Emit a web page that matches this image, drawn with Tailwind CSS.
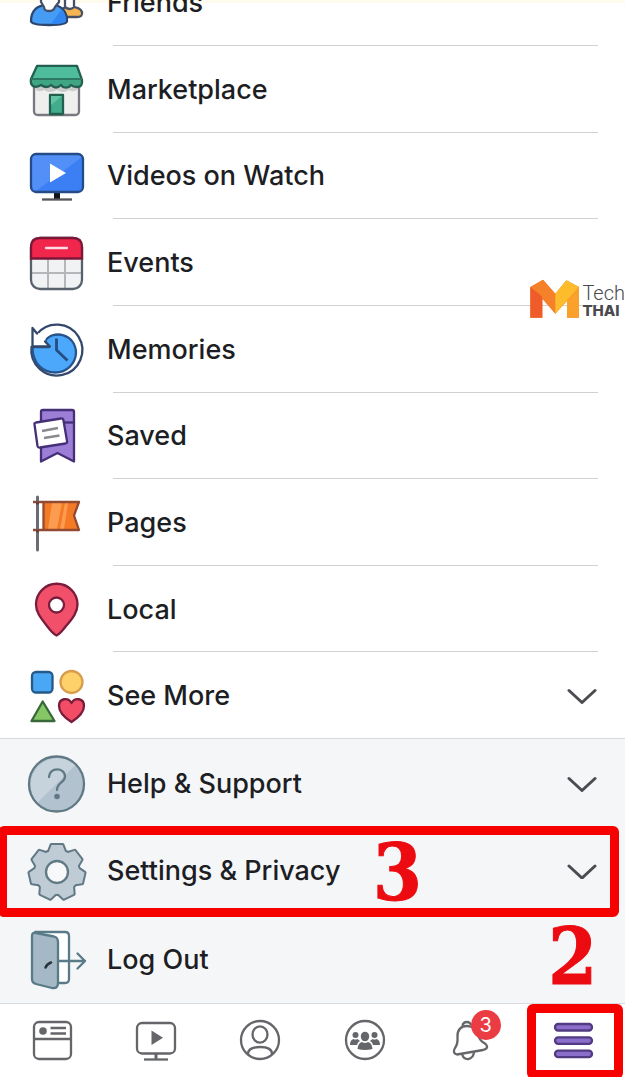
<!DOCTYPE html>
<html lang="en">
<head>
<meta charset="utf-8">
<meta name="viewport" content="width=device-width, initial-scale=1">
<title>Menu</title>
<script src="https://cdn.jsdelivr.net/npm/@tailwindcss/browser@4"></script>
</head>
<body class="bg-white font-['Inter','Liberation_Sans',sans-serif] text-[#1d1e24]">
<div class="relative flex min-h-screen flex-col overflow-hidden">
  <main class="flex flex-1 flex-col">

    <!-- Row scrolled partly out of view -->
    <div class="flex h-[46px] flex-col justify-end overflow-hidden bg-[linear-gradient(#fffbed_3px,transparent_3px)]">
      <a href="#friends" class="flex h-[86px] shrink-0 items-center gap-5 px-[27px] pt-0.5 text-[27px] leading-8 font-medium">
        <svg class="size-[60px] shrink-0" viewBox="0 0 60 60" fill="none" stroke-width="2.300" stroke-linejoin="round">
          <path d="M34 37C37 33 52 32 55 39Q56 44 50 44H34Z" fill="#f5b550" stroke="#475067"/>
          <path d="M38 24h9v10q-4 4-9 0Z" fill="#fff" stroke="#475067"/>
          <path d="M4 48C4 38 10 33 18 32H28C36 34 40 40 40 48Q40 52 22 52Q4 52 4 48Z" fill="#459cf5" stroke="#2c4670"/>
          <path d="M24 51Q39 51 39 47Q39 41 34 37Z" fill="#3286ef"/>
          <path d="M14 18h18v11L28 34Q27 38 22 38Q17 38 17 34L14 29Z" fill="#fff" stroke="#475067"/>
        </svg>
        <span>Friends</span>
      </a>
      <hr class="mr-[27px] ml-[113px] border-[#d0d1d4]">
    </div>

    <ul class="flex flex-1 flex-col text-[27px] leading-8 font-medium">
      <li class="flex min-h-16 flex-1 flex-col">
        <a href="#marketplace" class="flex flex-1 items-center gap-5 px-[27px] pt-0.5">
          <svg class="size-[60px] shrink-0" viewBox="0 0 60 60" fill="none" stroke-width="2.300" stroke-linejoin="round">
            <path d="M7 24V51Q7 55 11 55H48Q52 55 52 51V24Z" fill="#efefee" stroke="#7b7781"/>
            <path d="M8 26H51V29Q47 33 42 30Q36 34 30 30Q23 34 17 30Q11 33 8 29Z" fill="#c9cccb"/>
            <path d="M23 35H36V54H23Z" fill="#43ac8c" stroke="#23614f"/>
            <path d="M24 45L35 36H24Z" fill="#63c3a5"/>
            <path d="M10 6H50L55 20Q56 27 50 27Q46 27 44 25Q41 29 36 27L34 25Q29 30 24 25Q20 29 14 25Q9 28 6 26Q3 24 4 19Z" fill="#3fa583" stroke="#24604f"/>
            <path d="M11 7H49L53 18H6Z" fill="#4fbd9c"/>
            <path d="M4 19H55" stroke="#2d7862" stroke-width="2"/>
          </svg>
          <span>Marketplace</span>
        </a>
        <hr class="mr-[27px] ml-[113px] border-[#d0d1d4]">
      </li>
      <li class="flex min-h-16 flex-1 flex-col">
        <a href="#watch" class="flex flex-1 items-center gap-5 px-[27px] pt-0.5">
          <svg class="size-[60px] shrink-0" viewBox="0 0 60 60" fill="none">
            <path d="M27 45h6v8h-6z" fill="#111319"/>
            <path d="M15 53.500H45" stroke="#55565c" stroke-width="2.300"/>
            <rect x="4" y="8" width="52" height="38" rx="5" fill="#3c7ef3"/>
            <path d="M5 38V13Q5 9 9 9H51Q54 9 54 12L9 45Q5 45 5 38Z" fill="#5290f8"/>
            <rect x="4" y="8" width="52" height="38" rx="5" stroke="#254b86" stroke-width="2.300"/>
            <path d="M23 17.500L39 27L23 36.500Z" fill="#fff"/>
          </svg>
          <span>Videos on Watch</span>
        </a>
        <hr class="mr-[27px] ml-[113px] border-[#d0d1d4]">
      </li>
      <li class="flex min-h-16 flex-1 flex-col">
        <a href="#events" class="flex flex-1 items-center gap-5 px-[27px] pt-0.5">
          <svg class="size-[60px] shrink-0" viewBox="0 0 60 60" fill="none" stroke-width="2.300">
            <rect x="4" y="5" width="51" height="51" rx="9" fill="#f1f2f4"/>
            <path d="M21 26V55M38 26V55M5 40H54" stroke="#b5b6ba" stroke-width="2"/>
            <rect x="4" y="5" width="51" height="51" rx="9" stroke="#59616d"/>
            <path d="M4 25.500V14Q4 5 13 5H46Q55 5 55 14V25.500Z" fill="#f0264c" stroke="#7d1637"/>
            <path d="M19 15H40" stroke="#ffdce3" stroke-linecap="round"/>
          </svg>
          <span>Events</span>
        </a>
        <hr class="mr-[27px] ml-[113px] border-[#d0d1d4]">
      </li>
      <li class="flex min-h-16 flex-1 flex-col">
        <a href="#memories" class="flex flex-1 items-center gap-5 px-[27px] pt-0.5">
          <svg class="size-[60px] shrink-0" viewBox="0 0 60 60" fill="none" stroke="#33486b" stroke-width="2.300" stroke-linejoin="round" stroke-linecap="round">
            <path d="M10 14A25.500 25.500 0 1 1 4.500 27" fill="#fff"/>
            <path d="M5.500 27H22L18 21C26 9 49 14 49 33A20.500 20.500 0 0 1 28.500 52.500C16 52.500 5.500 44 5.500 27Z" fill="#4ba8fb" stroke="#27548c"/>
            <path d="M5.500 8V26.500H23L18 21.500L20 12L10 13.500Z" fill="#fff" stroke="none"/>
            <path d="M18 21.500L23 26.500H5.500V8L10 13.500"/>
            <path d="M29.500 18.500V30L40.500 40.500" stroke="#264d80" stroke-width="2.800" stroke-linecap="butt"/>
          </svg>
          <span>Memories</span>
        </a>
        <hr class="mr-[27px] ml-[113px] border-[#d0d1d4]">
      </li>
      <li class="flex min-h-16 flex-1 flex-col">
        <a href="#saved" class="flex flex-1 items-center gap-5 px-[27px] pt-0.5">
          <svg class="size-[60px] shrink-0" viewBox="0 0 60 60" fill="none" stroke="#452f78" stroke-width="2.300" stroke-linejoin="round">
            <path d="M14 55.500V6Q14 4 16 4H45Q47 4 47 6V55.500L30.500 47Z" fill="#9d7ed6"/>
            <path d="M36 16.500H47"/>
            <path d="M9 16.500L34 12.500Q36 12 36.500 14.500L40 35Q40.500 37 38.500 37.500L13 41.500Q11 42 10.500 40L7.500 18.500Q7 17 9 16.500Z" fill="#fff"/>
            <path d="M15 25L31 22M17 32L32.500 29.500" stroke="#8b898e"/>
          </svg>
          <span>Saved</span>
        </a>
        <hr class="mr-[27px] ml-[113px] border-[#d0d1d4]">
      </li>
      <li class="flex min-h-16 flex-1 flex-col">
        <a href="#pages" class="flex flex-1 items-center gap-5 px-[27px] pt-0.5">
          <svg class="size-[60px] shrink-0" viewBox="0 0 60 60" fill="none" stroke-width="2.300" stroke-linejoin="round">
            <path d="M16.500 9H52L47 22.500L52 37H16.500Z" fill="#f47a25"/>
            <path d="M25 10H35L30 36H21ZM38 10H41L37 36H33Z" fill="#fb9c51"/>
            <path d="M6 9H52L47 22.500L52 37H6M16.500 9V37" stroke="#944a30"/>
            <path d="M10.500 4V57" stroke="#6b6d75" stroke-width="3" stroke-linecap="round"/>
            <path d="M9 10h3M9 38h3" stroke="#683d3b" stroke-width="3"/>
          </svg>
          <span>Pages</span>
        </a>
        <hr class="mr-[27px] ml-[113px] border-[#d0d1d4]">
      </li>
      <li class="flex min-h-16 flex-1 flex-col">
        <a href="#local" class="flex flex-1 items-center gap-5 px-[27px] pt-0.5">
          <svg class="size-[60px] shrink-0" viewBox="0 0 60 60" fill="none" stroke="#7a1c3b" stroke-width="2.300" stroke-linejoin="round">
            <path d="M29.500 55.500Q26 54 20 46C13 37 9 32 9 24.500A20.500 20.500 0 0 1 50.500 24.500C50.500 32 46 38 39 46Q33 54 29.500 55.500Z" fill="#f2506a"/>
            <circle cx="29.500" cy="25" r="7.500" fill="#fff"/>
          </svg>
          <span>Local</span>
        </a>
        <hr class="mr-[27px] ml-[113px] border-[#d0d1d4]">
      </li>
      <li class="flex min-h-16 flex-1 flex-col">
        <button type="button" class="flex flex-1 items-center gap-5 px-[27px] pt-0.5 text-left">
          <svg class="size-[60px] shrink-0" viewBox="0 0 60 60" fill="none" stroke-width="2.300" stroke-linejoin="round">
            <rect x="5" y="6" width="20.500" height="20.500" rx="4" fill="#4aa7f4" stroke="#255a88"/>
            <circle cx="44.500" cy="16" r="11" fill="#ffd16b" stroke="#d79d4d"/>
            <path d="M15.700 35.500L4.500 55H27.500Z" fill="#85c765" stroke="#39683b"/>
            <path d="M44.500 56Q32 48 32 40C32 32 41 31 44.500 37C48 31 57 32 57 40Q57 48 44.500 56Z" fill="#f24c67" stroke="#7a1c3b"/>
          </svg>
          <span class="flex-1">See More</span>
          <svg class="w-8 shrink-0" viewBox="0 0 32 16" fill="none" stroke="#4b4c52" stroke-width="3" stroke-linecap="round" stroke-linejoin="round"><path d="M3 3L16 15L29 3" transform="translate(0 -0.500)"/></svg>
        </button>
        <hr class="border-[#d5d8dc]">
      </li>
    </ul>

    <ul class="bg-[#f5f6f8] text-[27px] leading-8 font-medium">
      <li>
        <button type="button" class="flex h-[88px] w-full items-center gap-5 px-[27px] pt-0.5 text-left">
          <svg class="size-[60px] shrink-0" viewBox="0 0 60 60" fill="none" stroke="#607985" stroke-width="2.300">
            <circle cx="29.500" cy="30" r="27.500" fill="#b2c3cf" stroke="none"/>
            <path d="M10 49A27.500 27.500 0 0 1 49 10.500Z" fill="#c6d3dc" stroke="none"/>
            <circle cx="29.500" cy="30" r="27.500"/>
            <path d="M22 23C22 13 38 13 38 22.500C38 29 30 28 30 36" stroke-linecap="round"/>
            <circle cx="30" cy="42.500" r="2.800" fill="#607985" stroke="none"/>
          </svg>
          <span class="flex-1">Help &amp; Support</span>
          <svg class="w-8 shrink-0" viewBox="0 0 32 16" fill="none" stroke="#4b4c52" stroke-width="3" stroke-linecap="round" stroke-linejoin="round"><path d="M3 3L16 15L29 3" transform="translate(0 -0.500)"/></svg>
        </button>
      </li>
      <li class="relative">
        <button type="button" class="flex h-[88px] w-full items-center gap-5 px-[27px] text-left">
          <svg class="size-[60px] shrink-0" viewBox="0 0 60 60" fill="none">
            <defs>
              <path id="tooth" d="M18.500 13L22 10.500L24.500 4H35.500L38 10.500L41.500 13V24H18.500Z"/>
              <g id="gear">
                <circle cx="30" cy="31" r="20.500"/>
                <use href="#tooth"/>
                <use href="#tooth" transform="rotate(51.430 30 31)"/>
                <use href="#tooth" transform="rotate(102.860 30 31)"/>
                <use href="#tooth" transform="rotate(154.290 30 31)"/>
                <use href="#tooth" transform="rotate(205.710 30 31)"/>
                <use href="#tooth" transform="rotate(257.140 30 31)"/>
                <use href="#tooth" transform="rotate(308.570 30 31)"/>
              </g>
            </defs>
            <use href="#gear" fill="#607985" stroke="#607985" stroke-width="4" stroke-linejoin="round"/>
            <use href="#gear" fill="#bfccd6"/>
            <circle cx="30" cy="31" r="11" fill="#f7f8fa" stroke="#607985" stroke-width="2.300"/>
          </svg>
          <span>Settings &amp; Privacy</span>
          <svg class="ml-auto w-8 shrink-0" viewBox="0 0 32 16" fill="none" stroke="#4b4c52" stroke-width="3" stroke-linecap="round" stroke-linejoin="round"><path d="M3 3L16 15L29 3"/></svg>
        </button>
        <!-- Step 3 callout -->
        <div class="pointer-events-none absolute -top-px right-1.5 -bottom-0.5 -left-0.5 rounded-md border-9 border-[#f60000]"></div>
        <b class="pointer-events-none absolute top-0.5 left-[373px] font-['DejaVu_Serif_Condensed','DejaVu_Serif',serif] text-[78px] leading-[88px] text-[#ec0b10] [-webkit-text-stroke:1px_#ec0b10]">3</b>
      </li>
      <li class="relative">
        <button type="button" class="flex h-[88px] w-full items-center gap-5 px-[27px] pt-0.5 text-left">
          <svg class="size-[60px] shrink-0" viewBox="0 0 60 60" fill="none" stroke="#597b88" stroke-width="2.300" stroke-linejoin="round" stroke-linecap="round">
            <path d="M8 2H38Q42 2 42 6V49Q42 53 38 53H28" fill="#fff"/>
            <path d="M5 6Q5 2 9 3L27 6.500Q31 7.500 31 12V53Q31 59 25 58L9 54Q5 53 5 49Z" fill="#a4b9c5"/>
            <path d="M18.500 37.500Q20 34 24 32.500" stroke="#28363f" stroke-width="2.500"/>
            <path d="M31 31H58M50.500 23.500L58 31L50.500 38.500"/>
          </svg>
          <span>Log Out</span>
        </button>
        <!-- Step 2 callout number -->
        <b class="pointer-events-none absolute -top-0.5 right-7 font-['DejaVu_Serif_Condensed','DejaVu_Serif',serif] text-[78px] leading-[88px] text-[#ec0b10] [-webkit-text-stroke:1px_#ec0b10]">2</b>
      </li>
    </ul>
  </main>

  <nav class="grid h-[74px] grid-cols-6 border-t border-[#d9dbe0] bg-white" aria-label="Tabs">
    <a href="#feed" aria-label="News feed" class="flex items-center justify-center pb-0.5">
      <svg class="size-11" viewBox="0 0 44 44" fill="none" stroke="#65666a" stroke-width="2.300">
        <rect x="4" y="4" width="37" height="37" rx="5"/><path d="M4 21H41M20.500 10H36M20.500 15.500H36"/><circle cx="13" cy="13" r="3.800" fill="#65666a" stroke="none"/>
      </svg>
    </a>
    <a href="#video" aria-label="Video" class="flex items-center justify-center pb-0.5">
      <svg class="size-11" viewBox="0 0 44 44" fill="none" stroke="#65666a" stroke-width="2.300">
        <rect x="3" y="5" width="38" height="30.500" rx="5"/><path d="M22 35V41" stroke-width="3"/><path d="M10 41.500H34"/><path d="M17.500 12.500L29 19.800L17.500 27Z" fill="#65666a" stroke="none"/>
      </svg>
    </a>
    <a href="#profile" aria-label="Profile" class="flex items-center justify-center pb-0.5">
      <svg class="size-11" viewBox="0 0 44 44" fill="none" stroke="#65666a" stroke-width="2.300">
        <circle cx="22" cy="22" r="19"/><ellipse cx="22" cy="16.500" rx="7.500" ry="8.200"/><path d="M10 36C10 31 14 29 22 29S34 31 34 36"/>
      </svg>
    </a>
    <a href="#groups" aria-label="Groups" class="flex items-center justify-center pb-0.5">
      <svg class="size-11" viewBox="0 0 44 44" fill="#65666a">
        <circle cx="22" cy="22" r="19" fill="none" stroke="#65666a" stroke-width="2.300"/>
        <ellipse cx="22" cy="18.500" rx="4.200" ry="4.800"/><circle cx="12.500" cy="17" r="3"/><circle cx="31.500" cy="17" r="3"/>
        <path d="M19 24Q22 26 25 24Q29 25 29.500 31Q22 33 14.500 31Q15 25 19 24Z"/>
        <path d="M10.500 21Q12.500 22 14.500 21L17 23Q14.500 24 14 27H7Q7 22 10.500 21ZM33.500 21Q31.500 22 29.500 21L27 23Q29.500 24 30 27H37Q37 22 33.500 21Z"/>
      </svg>
    </a>
    <a href="#notifications" aria-label="Notifications, 3 new" class="flex items-center justify-center pb-0.5">
      <span class="relative">
        <svg class="size-11" viewBox="0 0 44 44" fill="none" stroke="#65666a" stroke-width="2.300" stroke-linejoin="round">
          <path d="M15.500 8Q16 4 20 4Q23 4 24 7"/>
          <path d="M10 36.500Q5 35 8 30Q11 26 10.500 19C10 12 14 8 20 8C27 8 30 12 31.500 18Q33 23 38 25.500Q43 30 36 32Z"/>
          <path d="M15 36Q16.500 41.500 21.500 41Q26.500 40 27 34"/>
        </svg>
        <span class="absolute -top-2 -right-2.5 flex size-[30px] items-center justify-center rounded-full bg-[#eb3b43] text-xl text-white">3</span>
      </span>
    </a>
    <a href="#menu" aria-label="Menu" aria-current="page" class="relative flex items-center justify-center pb-0.5">
      <svg class="size-11" viewBox="0 0 44 44" fill="#8b6dca" stroke="#523b82" stroke-width="2.300">
        <rect x="4" y="6" width="37" height="6.500" rx="3.200"/><rect x="4" y="19.300" width="37" height="6.500" rx="3.200"/><rect x="4" y="32.600" width="37" height="6.500" rx="3.200"/>
      </svg>
      <!-- Step 2 callout -->
      <span class="pointer-events-none absolute top-0 right-0.5 -bottom-0.5 left-1.5 rounded-md border-9 border-[#f60000]"></span>
    </a>
  </nav>

  <!-- Publisher watermark -->
  <div class="absolute top-[279px] right-0 flex items-start gap-0.5 text-[#4a4a4e]">
    <svg class="h-10 w-[50px]" viewBox="81 56 150 120">
      <path d="M82 80L120 58L157 100L190 60L228 80V172H192V122L157 160L118 116V172H82Z" fill="#f5812a"/>
      <path d="M82 80L118 98V172H82Z" fill="#ef5b29"/>
      <path d="M82 80L120 58L157 100V160L112 104Z" fill="#f5812a"/>
      <path d="M157 100L190 60L228 80L157 160Z" fill="#fdbc2c"/>
      <path d="M192 120L228 80V172H192Z" fill="#f9a12b"/>
    </svg>
    <div class="flex flex-col pt-1">
      <span class="font-['Roboto',sans-serif] text-[20px] leading-5 font-light">Tech</span>
      <span class="text-[15px] leading-4 font-extrabold">THAI</span>
    </div>
  </div>
</div>
</body>
</html>
